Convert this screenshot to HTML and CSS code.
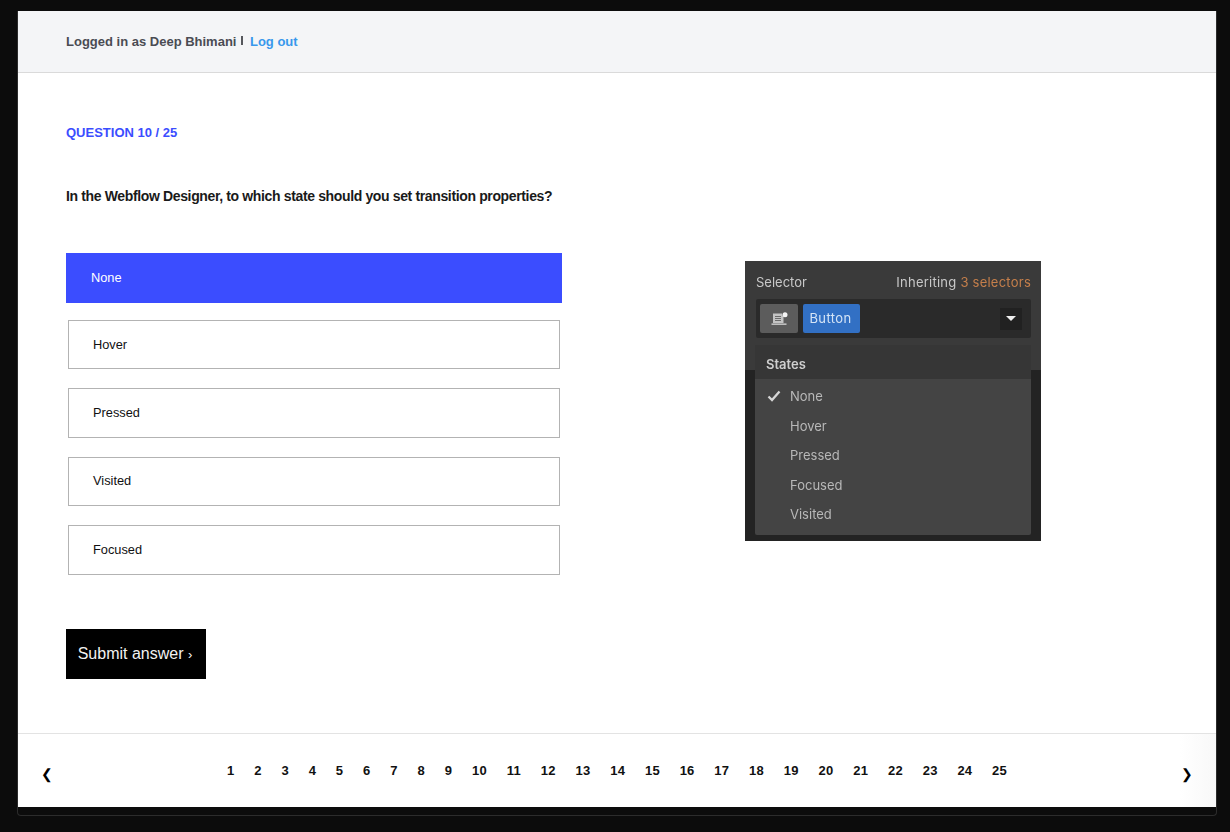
FILE: index.html
```html
<!DOCTYPE html>
<html lang="en">
<head>
    <meta charset="UTF-8">
    <meta name="viewport" content="width=device-width, initial-scale=1.0">
    <title>Question 10 / 25</title>
    <link rel="stylesheet" href="styles.css">
</head>
<body>
    <div class="frame">
        <div class="sheet">
            <header class="topbar">
                <span class="user">Logged in as Deep Bhimani</span>
                <span class="sep"></span>
                <a class="logout" href="#">Log out</a>
            </header>

            <main class="quiz">
                <div class="eyebrow">QUESTION 10 / 25</div>
                <h1 class="question">In the Webflow Designer, to which state should you set transition properties?</h1>

                <div class="columns">
                    <div class="options">
                        <div class="option selected">None</div>
                        <div class="option">Hover</div>
                        <div class="option">Pressed</div>
                        <div class="option">Visited</div>
                        <div class="option">Focused</div>
                    </div>

                    <!-- screenshot of the selector panel -->
                    <div class="panel">
                        <div class="panel-head">
                            <span>Selector</span>
                            <span class="inherit">Inheriting <span class="orange">3 selectors</span></span>
                        </div>
                        <div class="selector-row">
                            <span class="icon-btn">
                                <svg width="17" height="14" viewBox="0 0 17 14">
                                    <path d="M2 1.500h9v2h1.500V11H2z" fill="#c4c4c4"/>
                                    <path d="M4 4h6v1H4zM4 6h6v1H4zM4 8h6v1H4z" fill="#6a6a6a"/>
                                    <path d="M0.500 11.500h15v1.300h-15z" fill="#d8d8d8"/>
                                    <circle cx="14" cy="2.700" r="2.500" fill="#f4f4f4"/>
                                </svg>
                            </span>
                            <span class="tag">Button</span>
                            <span class="caret-box"><span class="caret"></span></span>
                        </div>
                        <div class="states">
                            <div class="states-title">States</div>
                            <ul class="states-list">
                                <li>
                                    <svg class="check" width="14" height="12" viewBox="0 0 14 12">
                                        <path d="M1.500 6.500l3.500 3.500 7.500-8.500" fill="none" stroke="#d6d6d6" stroke-width="2.300"/>
                                    </svg>
                                    None
                                </li>
                                <li>Hover</li>
                                <li>Pressed</li>
                                <li>Focused</li>
                                <li>Visited</li>
                            </ul>
                        </div>
                    </div>
                </div>

                <button class="submit">Submit answer <span class="arrow">›</span></button>
            </main>

            <footer class="pager">
                <a class="nav" href="#">❮</a>
                <div class="pages">
                    <a href="#">1</a><a href="#">2</a><a href="#">3</a><a href="#">4</a><a href="#">5</a>
                    <a href="#">6</a><a href="#">7</a><a href="#">8</a><a href="#">9</a><a href="#">10</a>
                    <a href="#">11</a><a href="#">12</a><a href="#">13</a><a href="#">14</a><a href="#">15</a>
                    <a href="#">16</a><a href="#">17</a><a href="#">18</a><a href="#">19</a><a href="#">20</a>
                    <a href="#">21</a><a href="#">22</a><a href="#">23</a><a href="#">24</a><a href="#">25</a>
                </div>
                <a class="nav" href="#">❯</a>
            </footer>
        </div>
    </div>
</body>
</html>
```

FILE: styles.css
```css
html, body {
    height: 100%;
}

body {
    margin: 0;
    background: #0c0c0c;
    font-family: "Liberation Sans", Arial, sans-serif;
    overflow: hidden;
}

a {
    text-decoration: none;
}

.frame {
    width: 1200px;
    height: 805px;
    margin: 11px 0 0 17px;
    box-sizing: border-box;
    border: 1px solid #2c2c2c;
    border-top: none;
    border-radius: 0 0 4px 4px;
}

.sheet {
    height: 796px;
    background: #fff;
    display: flex;
    flex-direction: column;
}

.topbar {
    height: 61px;
    padding-left: 48px;
    display: flex;
    align-items: center;
    background: #f4f5f7;
    border-bottom: 1px solid #dadada;
    font-size: 13px;
    font-weight: bold;
}

.user {
    color: #4a4c53;
}

.sep {
    width: 2px;
    height: 9px;
    margin: -3px 6.500px 0 5px;
    background: #55575d;
}

.logout {
    color: #3898ec;
}

.quiz {
    flex: 1;
    padding: 52px 0 0 48px;
}

.eyebrow {
    color: #3b4dff;
    font-size: 13px;
    font-weight: bold;
    line-height: 15px;
}

.question {
    margin: 47px 0 0;
    color: #1a1a1a;
    font-size: 14px;
    font-weight: bold;
    line-height: 18px;
    letter-spacing: -0.360px;
}

.columns {
    display: flex;
    margin-top: 48px;
}

.options {
    width: 496px;
    display: flex;
    flex-direction: column;
    align-items: center;
    gap: 18.900px;
}

.option {
    width: 492px;
    height: 49.500px;
    box-sizing: border-box;
    padding: 0 0 1px 24px;
    display: flex;
    align-items: center;
    border: 1px solid #b3b3b3;
    color: #111;
    font-size: 12.800px;
}

.option.selected {
    width: 496px;
    height: 50px;
    margin-bottom: -2px;
    border: none;
    background: #3b4dff;
    color: #fff;
    padding: 0 0 2px 25px;
}

.panel {
    width: 296px;
    height: 280px;
    margin: 8px 0 0 183px;
    box-sizing: border-box;
    padding: 11px 10px 0 11px;
    background: linear-gradient(#3a3a3a 109px, #232323 109px);
    color: #c8c8c8;
    font-family: Inter, "Liberation Sans", sans-serif;
    font-size: 13px;
    filter: blur(0.5px);
}

.panel-head {
    display: flex;
    justify-content: space-between;
    line-height: 20px;
}

.inherit {
    letter-spacing: 0.240px;
}

.orange {
    color: #c57f4b;
}

.selector-row {
    height: 39px;
    margin-top: 7px;
    padding: 0 9px 0 4px;
    display: flex;
    align-items: center;
    background: #2a2a2a;
    border-radius: 2px;
}

.icon-btn {
    width: 38px;
    height: 29px;
    margin-right: 5px;
    display: flex;
    align-items: center;
    justify-content: center;
    background: #5c5c5c;
    border-radius: 2px;
}

.tag {
    width: 57px;
    height: 29px;
    box-sizing: border-box;
    padding: 0 2px 1px 0;
    display: flex;
    align-items: center;
    justify-content: center;
    background: #3270c4;
    border-radius: 2px;
    color: #d5e4f6;
    letter-spacing: 0.400px;
}

.caret-box {
    width: 22px;
    height: 22px;
    margin-left: auto;
    display: flex;
    align-items: center;
    justify-content: center;
    background: #212121;
}

.caret {
    width: 0;
    height: 0;
    border-left: 5.500px solid transparent;
    border-right: 5.500px solid transparent;
    border-top: 5px solid #eee;
}

.states {
    height: 190px;
    margin: 7px 0 0 -1px;
    background: #444;
    border-radius: 2px;
}

.states-title {
    height: 34px;
    padding: 4px 0 0 11px;
    box-sizing: border-box;
    display: flex;
    align-items: center;
    background: #363636;
    font-weight: 600;
    color: #cfcfcf;
}

.states-list {
    margin: 0;
    padding: 3px 0 0 35px;
    list-style: none;
}

.states-list li {
    position: relative;
    height: 29.600px;
    line-height: 29.600px;
    color: #b8b8b8;
}

.check {
    position: absolute;
    left: -23px;
    top: 8px;
}

.submit {
    display: block;
    width: 140px;
    height: 50px;
    margin-top: 54px;
    padding: 0 2px 0 0;
    border: none;
    background: #000;
    color: #f2f2f2;
    font-family: "Liberation Sans", Arial, sans-serif;
    font-size: 16px;
}

.arrow {
    font-size: 13px;
}

.pager {
    height: 73px;
    padding: 0 23px;
    display: flex;
    align-items: flex-start;
    justify-content: space-between;
    border-top: 1px solid #e3e3e3;
    background: linear-gradient(to right, #fff 97%, #f8f8f8 100%);
}

.nav {
    margin-top: 30px;
    color: #000;
    font-size: 14px;
    line-height: 20px;
}

.pages {
    margin-top: 29px;
    display: flex;
    font-size: 13px;
    font-weight: bold;
    line-height: 15px;
    letter-spacing: 0.250px;
}

.pages a {
    padding: 0 9.885px;
    color: #111;
}
```
